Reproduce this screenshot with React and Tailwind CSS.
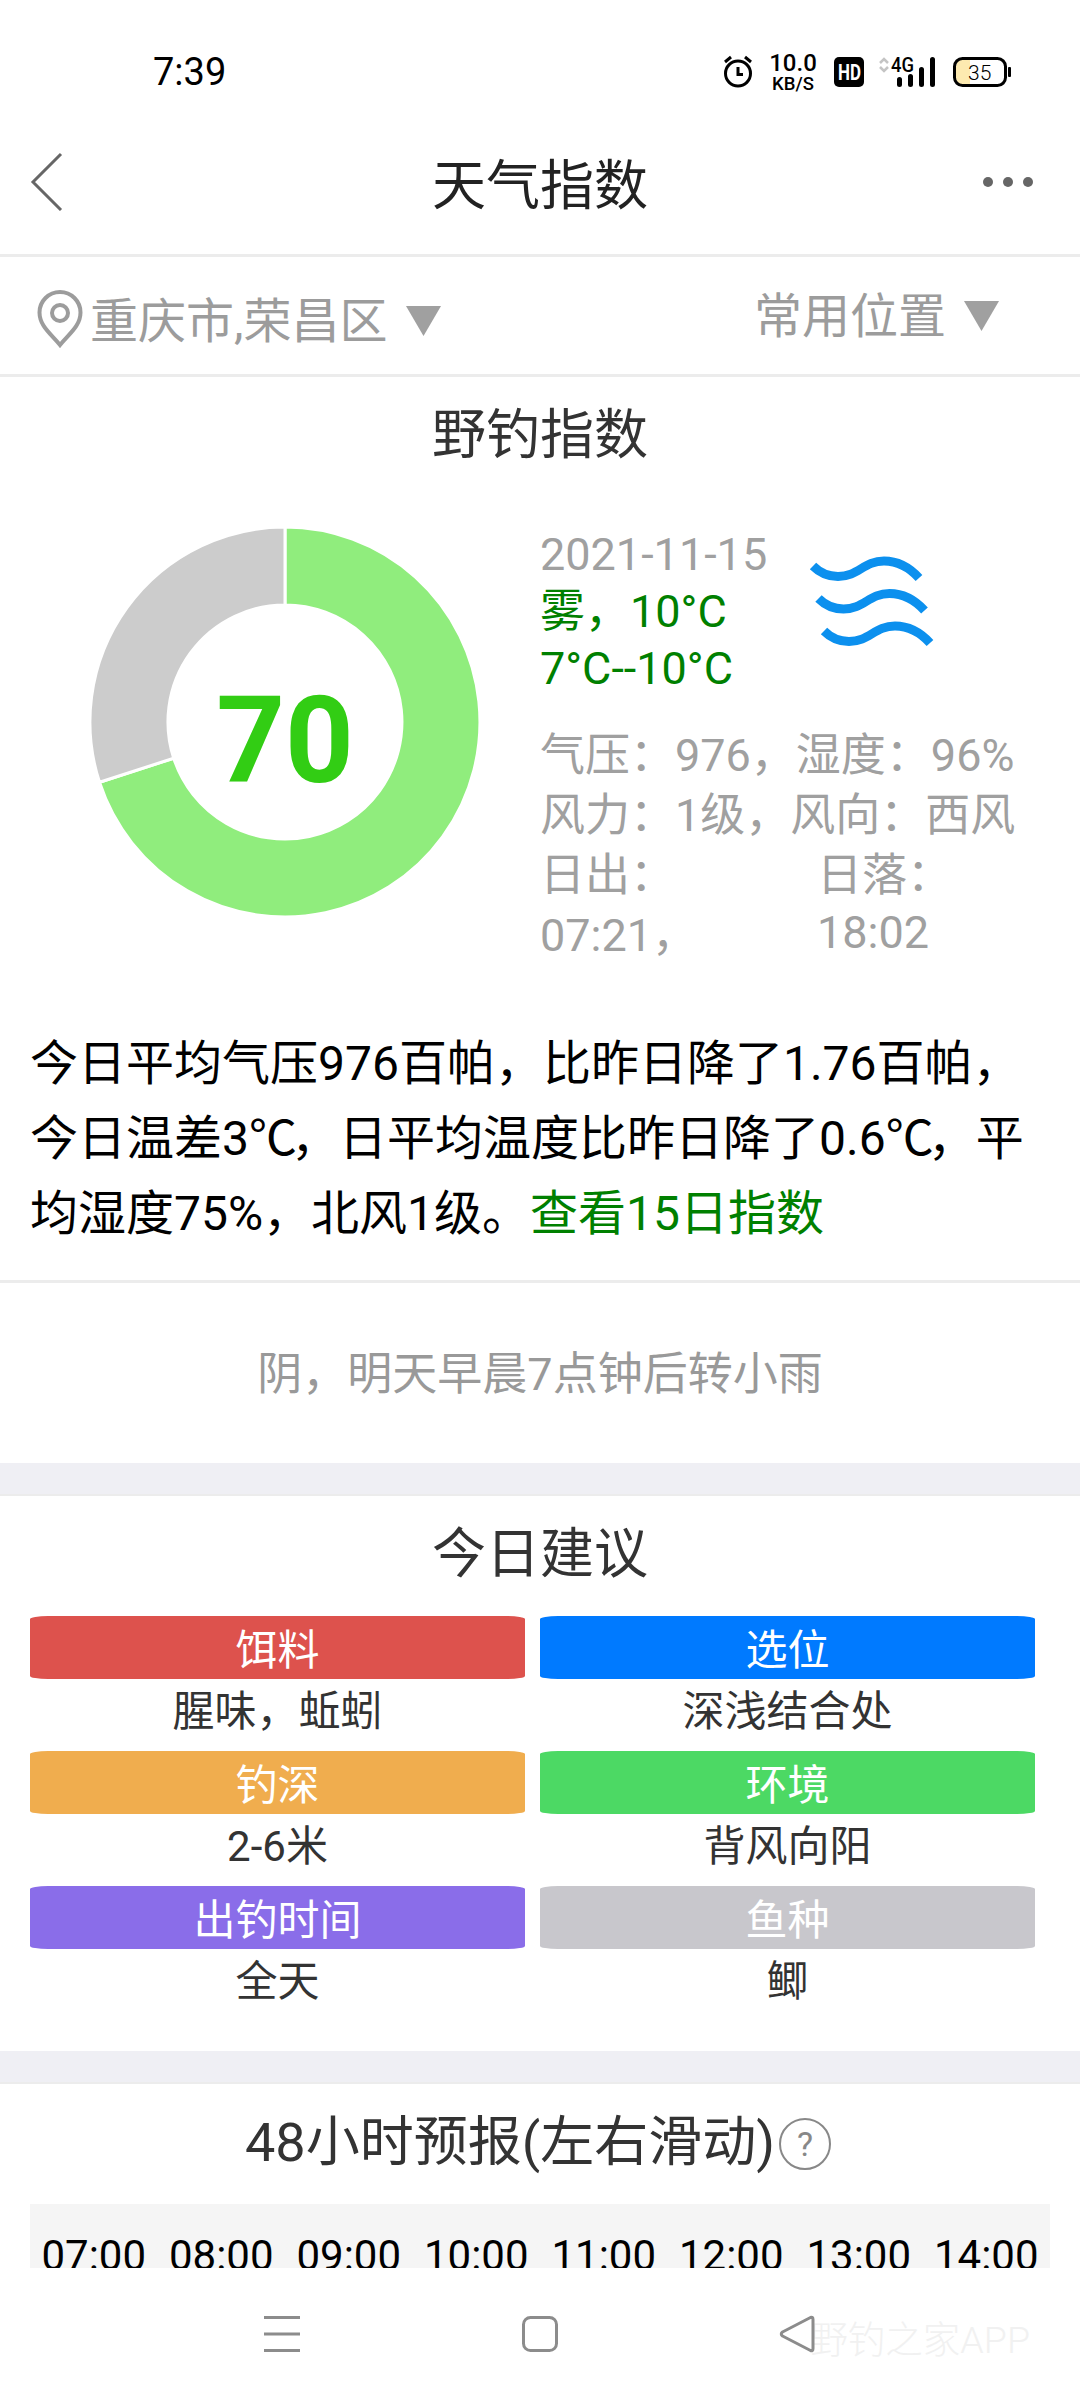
import React from "react";

const advice = [
    { title: "饵料", value: "腥味，蚯蚓", color: "bg-[#dd524d]" },
    { title: "选位", value: "深浅结合处", color: "bg-[#007aff]" },
    { title: "钓深", value: "2-6米", color: "bg-[#f0ad4e]" },
    { title: "环境", value: "背风向阳", color: "bg-[#4cd964]" },
    { title: "出钓时间", value: "全天", color: "bg-[#8a6de9]" },
    { title: "鱼种", value: "鲫", color: "bg-[#c8c7cc]" }
];

const hours = ["07:00", "08:00", "09:00", "10:00", "11:00", "12:00", "13:00", "14:00"];

function StatusBar() {
    return (
        <div className="h-[108px] shrink-0 flex items-start text-black">
            <span className="ml-[153px] mt-[50px] text-[38px] leading-[44px]">7:39</span>
            <div className="ml-auto mr-[68px] mt-[52px] flex items-start">
                <svg width="32" height="36" viewBox="0 0 32 36" fill="none" stroke="#000" strokeWidth="3">
                    <circle cx="16" cy="21.5" r="12.5" />
                    <path d="M16 15v7.500h5M3 10l6-5M29 10l-6-5" />
                </svg>
                <div className="ml-[14px] w-[50px] flex flex-col items-center font-medium">
                    <span className="text-[24px] leading-[23px]">10.0</span>
                    <span className="text-[18.5px] leading-[18px]">KB/S</span>
                </div>
                <svg className="ml-[16px] mt-[5px] overflow-visible" width="30" height="30" viewBox="0 0 30 30">
                    <rect width="30" height="30" rx="5" />
                    <text x="4" y="23" fontSize="22" fontWeight="700" fill="#fff" textLength="23" lengthAdjust="spacingAndGlyphs">HD</text>
                </svg>
                <svg className="ml-[14px]" width="60" height="36" viewBox="0 0 60 36">
                    <path d="M2 11l4-4 4 4M2 15l4 4 4-4" fill="none" stroke="#c4c4c4" strokeWidth="2.5" />
                    <text x="13" y="19.500" fontSize="20" fontWeight="500" textLength="23" lengthAdjust="spacingAndGlyphs">4G</text>
                    <path d="M21.500 27.500v5M32.500 24.500v8M43.500 17.500v15M54.500 7.500v25" stroke="#000" strokeWidth="5" strokeLinecap="round" />
                </svg>
                <svg className="ml-[14px]" width="60" height="36" viewBox="0 0 60 36">
                    <path d="M12 6h6v28h-6q-8-1-8-9V15q0-8 8-9z" fill="#fdeab0" />
                    <rect x="2.500" y="6.500" width="51" height="27" rx="8" fill="none" stroke="#000" strokeWidth="3" />
                    <rect x="56" y="15" width="3" height="10" rx="1" />
                    <text x="16" y="27.500" fontSize="21" fontWeight="300">35</text>
                </svg>
            </div>
        </div>
    );
}

function NavBar() {
    return (
        <div className="h-[149px] shrink-0 flex items-center pl-[28px] pr-[47px] border-b-[3px] border-[#ececec]">
            <svg width="36" height="60" viewBox="0 0 36 60" fill="none" stroke="#666" strokeWidth="3">
                <path d="M33 3L5 31l28 28" />
            </svg>
            <h1 className="flex-1 text-center text-[54px] leading-[60px] text-[#222] pl-[33px] pt-[12px]">天气指数</h1>
            <svg className="mt-[2px]" width="50" height="12" viewBox="0 0 50 12" fill="#666">
                <circle cx="5" cy="6" r="5" />
                <circle cx="25" cy="6" r="5" />
                <circle cx="45" cy="6" r="5" />
            </svg>
        </div>
    );
}

function Triangle() {
    return (
        <svg width="35" height="30" viewBox="0 0 35 30">
            <path d="M0 0h35L17.500 30z" fill="#a0a0a0" />
        </svg>
    );
}

function LocationBar() {
    return (
        <div className="h-[120px] shrink-0 flex items-start justify-between pl-[36px] pr-[81px] text-[48px] leading-[60px] text-[#9c9c9c] border-b-[3px] border-[#ececec]">
            <div className="mt-[32px] flex items-center">
                <svg className="-mt-[4px]" width="48" height="60" viewBox="0 0 48 60" fill="none" stroke="#9c9c9c" strokeWidth="4">
                    <path d="M24 56C15 45 3.500 37 3.500 23.500a20.500 20.500 0 0 1 41 0c0 13.500-11.500 21.500-20.500 32.500z" />
                    <circle cx="24" cy="24" r="8" />
                </svg>
                <span className="ml-[6px] mr-[19px] pt-[3px]">重庆市,荣昌区</span>
                <Triangle />
            </div>
            <div className="mt-[27px] flex items-center">
                <span className="mr-[18px] pt-[3px]">常用位置</span>
                <Triangle />
            </div>
        </div>
    );
}

function ScoreRing() {
    return (
        <svg width="392" height="392" viewBox="-196 -196 392 392">
            <path d="M0-195A195 195 0 1 1-185.500 60.300L-111.300 36.200A117 117 0 1 0 0-117z" fill="#90ed7d" stroke="#fff" strokeWidth="3" />
            <path d="M-185.500 60.300A195 195 0 0 1 0-195V-117A117 117 0 0 0-111.300 36.200z" fill="#ccc" stroke="#fff" strokeWidth="3" />
            <text x="0" y="60" textAnchor="middle" fontSize="120" fontWeight="700" fill="#32cd14">70</text>
        </svg>
    );
}

function FogIcon() {
    return (
        <svg width="130" height="100" viewBox="0 0 130 100" fill="none" stroke="#0c90ee" strokeWidth="9">
            <path d="M9 13C16 20 25 23.500 34 23.500C54 23.500 60 8 80 8C94 8 105 14 115 25" />
            <path d="M14.500 45.500C21.500 52.500 30.500 56 39.500 56C59.500 56 65.500 40.500 85.500 40.500C99.500 40.500 110.500 46.500 120.500 57.500" />
            <path d="M20 78C27 85 36 88.500 45 88.500C65 88.500 71 73 91 73C105 73 116 79 126 90" />
        </svg>
    );
}

function IndexSection() {
    return (
        <section className="h-[906px] shrink-0 border-b-[3px] border-[#ececec]">
            <h2 className="pt-[29px] text-center text-[54px] leading-[60px] text-[#333]">野钓指数</h2>
            <div className="mt-[60px] pl-[89px] flex items-start">
                <ScoreRing />
                <div className="ml-[59px] text-[45px] text-[#a0a0a0]">
                    <div className="flex">
                        <div className="w-[264px] leading-[57px]">
                            <p>2021-11-15</p>
                            <p className="text-[#008000]">雾，10°C</p>
                            <p className="text-[#008000]">7°C--10°C</p>
                        </div>
                        <div className="pt-[27px]">
                            <FogIcon />
                        </div>
                    </div>
                    <div className="mt-[29px] leading-[60px] whitespace-nowrap">
                        <p>气压：976，湿度：96%</p>
                        <p>风力：1级，风向：西风</p>
                        <div className="flex">
                            <p className="w-[277px]">日出：<br />07:21，</p>
                            <div>
                                <p>日落：</p>
                                <p className="leading-[54px]">18:02</p>
                            </div>
                        </div>
                    </div>
                </div>
            </div>
            <p className="mt-[60px] pl-[30px] text-[48px] leading-[75px] text-black whitespace-nowrap">
                今日平均气压976百帕，比昨日降了1.76百帕，<br />
                今日温差3<span className="tracking-[-6px]">℃</span>，日平均温度比昨日降了0.6<span className="tracking-[-6px]">℃</span>，平<br />
                均湿度75%，北风1级。<a className="text-[#008000]">查看15日指数</a>
            </p>
        </section>
    );
}

function AdviceSection() {
    return (
        <section className="h-[555px] shrink-0">
            <h2 className="pt-[29px] text-center text-[54px] leading-[60px] text-[#333]">今日建议</h2>
            <div className="mt-[31px] pl-[30px] pr-[45px] grid grid-cols-2 gap-x-[15px] text-[42px] text-center">
                {advice.map((item) => (
                    <div key={item.title} className="h-[135px]">
                        <div className={`h-[63px] leading-[70px] text-white rounded-[18px/3px] ${item.color}`}>
                            {item.title}
                        </div>
                        <p className="leading-[65px] text-[#333]">{item.value}</p>
                    </div>
                ))}
            </div>
        </section>
    );
}

function ForecastSection() {
    return (
        <section className="flex-1 min-h-0 overflow-hidden px-[30px]">
            <div className="pt-[29px] pr-[4px] flex items-center justify-center gap-[4px] text-[54px] leading-[60px] text-[#333]">
                <h2>48小时预报(左右滑动)</h2>
                <span className="w-[52px] h-[52px] mt-[2px] rounded-full border-2 border-[#888] text-[#888] text-[34px] leading-[49px] text-center">?</span>
            </div>
            <div className="mt-[31px] h-[120px] bg-[#f5f5f5] pt-[27px] grid grid-cols-8 text-center text-[42px] leading-[50px] text-black">
                {hours.map((hour) => (
                    <span key={hour}>{hour}</span>
                ))}
            </div>
        </section>
    );
}

function SystemNav() {
    return (
        <div className="relative h-[132px] shrink-0 flex pt-[47px] pl-[263px]">
            <svg width="38" height="38" viewBox="0 0 38 38" stroke="#8c8c8c" strokeWidth="3">
                <path d="M1 2.500h36M1 19h36M1 35.500h36" />
            </svg>
            <svg className="ml-[220px]" width="38" height="38" viewBox="0 0 38 38" fill="none" stroke="#8c8c8c" strokeWidth="3">
                <rect x="2.500" y="2.500" width="33" height="33" rx="7" />
            </svg>
            <span className="absolute right-[50px] top-[48px] text-[37.5px] leading-[48px] font-light text-[#f1f1f1]">野钓之家APP</span>
            <svg className="relative ml-[220px]" width="38" height="38" viewBox="0 0 38 38" fill="none" stroke="#8c8c8c" strokeWidth="3" strokeLinejoin="round">
                <path d="M31.500 2.500q2.500-1 2.500 2v29q0 3-2.500 2L3.500 21q-2.500-2 0-4z" />
            </svg>
        </div>
    );
}

function App() {
    return (
        <div className="w-[1080px] h-[2400px] overflow-hidden flex flex-col bg-white font-[Roboto,'Noto_Sans_CJK_SC',sans-serif]">
            <StatusBar />
            <NavBar />
            <LocationBar />
            <IndexSection />
            <p className="h-[180px] shrink-0 text-center text-[45px] leading-[183px] text-[#999]">阴，明天早晨7点钟后转小雨</p>
            <div className="h-[33px] shrink-0 bg-[#efeff4] border-b-2 border-[#ececec]" />
            <AdviceSection />
            <div className="h-[33px] shrink-0 bg-[#efeff4] border-b-2 border-[#ececec]" />
            <ForecastSection />
            <SystemNav />
        </div>
    );
}

export default App;
